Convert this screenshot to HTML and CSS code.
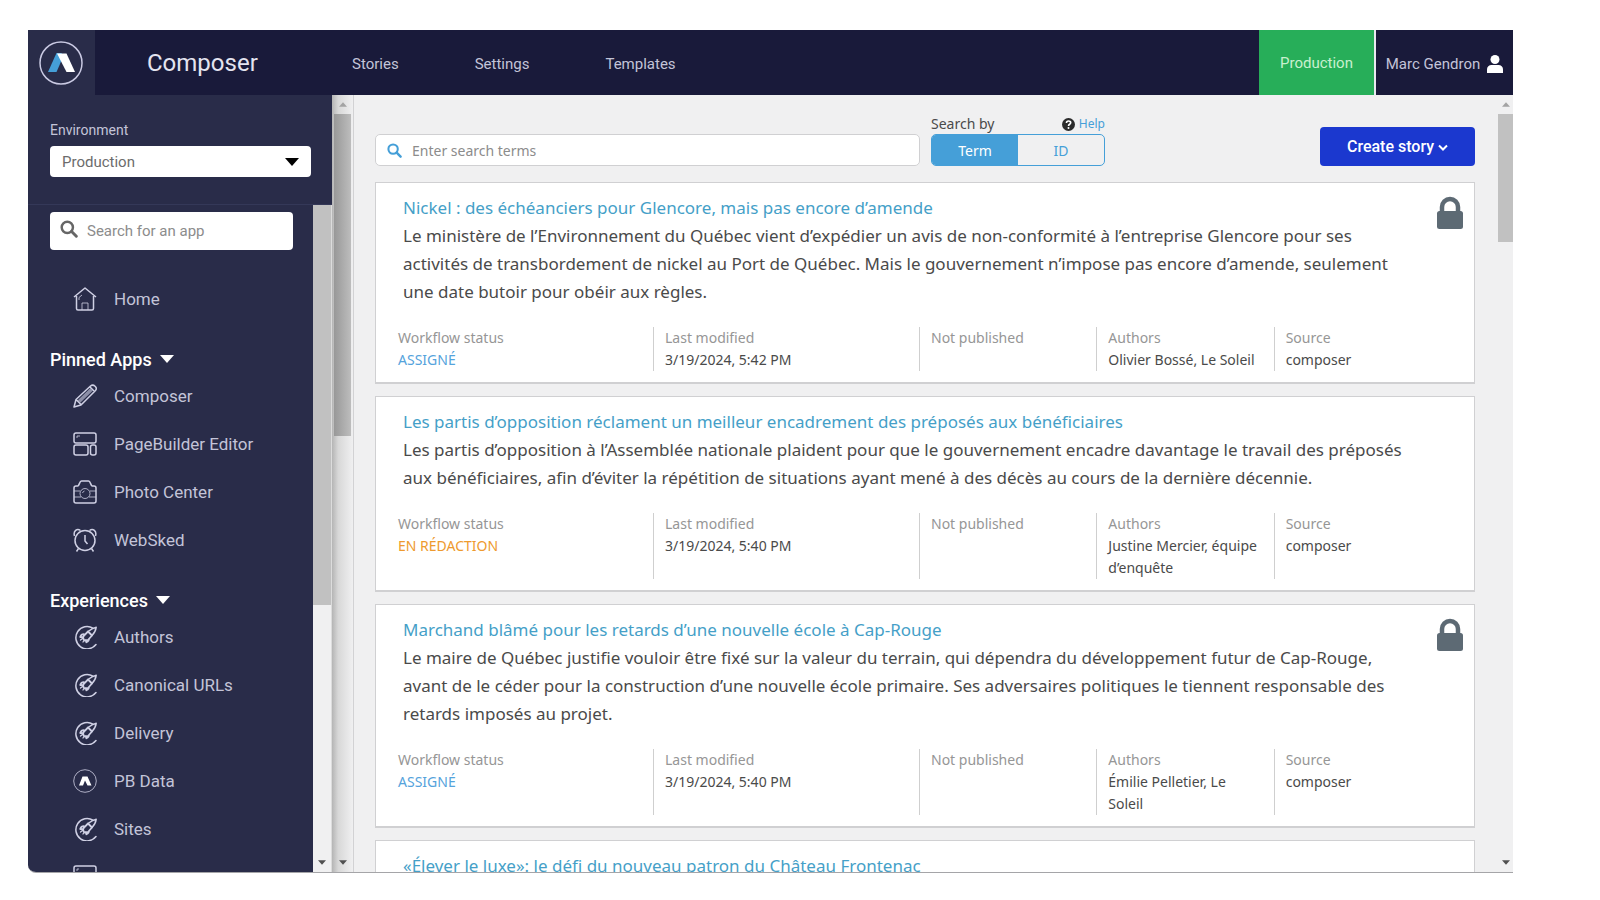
FILE: index.html
```html
<!DOCTYPE html>
<html lang="en">
<head>
<meta charset="utf-8">
<title>Composer</title>
<link rel="stylesheet" href="styles.css">
</head>
<body>
<svg class="sprite" aria-hidden="true">
  <symbol id="i-search" viewBox="0 0 16 16"><circle cx="6.5" cy="6.5" r="5" fill="none" stroke="currentColor" stroke-width="2.2"/><path d="M10.3 10.3l4.2 4.2" stroke="currentColor" stroke-width="2.6" stroke-linecap="round"/></symbol>
  <symbol id="i-rocket" viewBox="0 0 24 24"><g fill="none" stroke="currentColor" stroke-linecap="round" stroke-linejoin="round"><path d="M23 19.500A11.200 11.200 0 1 1 20 3.200M15 6.500C17.500 4.500 20 3 23.200 2.200 22.800 5.500 21.500 8 19 10.500" stroke-width="1.500"/><path d="M15 6.500l4 4-4 4.500c-1.500 1-3 .8-4-.2s-1.200-2.500-.2-4zM10.800 9.200c-1.800 0-3 1-3.600 2.800l3 .3M16 13.800c0 1.500-.8 2.700-2.600 3.500l-.4-2.500" stroke-width="1.800"/><path d="M9.500 13.500l-2 1.500M11 15.500L10 17" stroke-width="1.300"/></g></symbol>
  <symbol id="i-lock" viewBox="0 0 28 34"><path d="M6 16v-5a8 8 0 0 1 16 0v5" fill="none" stroke="currentColor" stroke-width="4.500"/><rect x="1" y="15" width="26" height="18" rx="2.500" fill="currentColor"/></symbol>
  <symbol id="i-down" viewBox="0 0 14 8"><path d="M0 0h14L7 8z" fill="currentColor"/></symbol>
</svg>

<div class="app">
  <header class="topbar">
    <a class="logo" href="#" aria-label="Arc home">
      <svg viewBox="0 0 44 44"><circle cx="22" cy="22" r="21" fill="none" stroke="#c9c9e2" stroke-width="1.500"/><path d="M9 31l8.500-19h5l1.500 4-6.500 15z" fill="#459fd8"/><path d="M18 12.500h9.500L36 31h-8.500z" fill="#fff"/></svg>
    </a>
    <div class="brand">Composer</div>
    <nav class="mainnav">
      <a href="#">Stories</a>
      <a href="#">Settings</a>
      <a href="#">Templates</a>
    </nav>
    <div class="env-tag">Production</div>
    <button class="user" type="button">Marc Gendron
      <svg viewBox="0 0 16 18"><circle cx="8" cy="4.500" r="4.500" fill="#fff"/><path d="M0 18v-3.500C0 11.500 2 10 4.500 10h7c2.500 0 4.500 1.500 4.500 4.500V18z" fill="#fff"/></svg>
    </button>
  </header>

  <div class="body">
    <aside class="sidebar">
      <div class="environment">
        <label for="env">Environment</label>
        <div class="select">
          <select id="env"><option>Production</option></select>
          <svg><use href="#i-down"/></svg>
        </div>
      </div>
      <div class="apps">
        <div class="apps-list">
          <label class="app-search"><svg><use href="#i-search"/></svg><input type="text" placeholder="Search for an app" aria-label="Search for an app"></label>
          <nav>
            <a class="item" href="#"><svg viewBox="0 0 24 24"><path d="M1 10L12 1l11 9M3.500 9v12.500a1.500 1.500 0 0 0 1.500 1.500h14a1.500 1.500 0 0 0 1.500-1.500V9"/><path class="thin" d="M9 23v-7h6v7M6 13v-2.500L9 8"/></svg>Home</a>
          </nav>
          <button class="heading" type="button">Pinned Apps <svg><use href="#i-down"/></svg></button>
          <nav>
            <a class="item" href="#"><svg viewBox="0 0 24 24"><path d="M1 23l2-7.500L17.500 2c3-2.500 7.500 1.500 5 4.500L8 21zM3 15.500L8.500 21M17 3l4.500 4.500"/><path d="M6 17.500L18.500 5.500" stroke-width="3.500" opacity=".6"/></svg>Composer</a>
            <a class="item" href="#"><svg viewBox="0 0 24 24"><rect x="1" y="1" width="22" height="10" rx="2"/><rect x="1" y="13" width="14" height="10" rx="2"/><rect x="17.500" y="13" width="5.500" height="10" rx="2"/><path class="thin" d="M4 6V4h3"/></svg>PageBuilder Editor</a>
            <a class="item" href="#"><svg viewBox="0 0 24 24"><path d="M1 8a2 2 0 0 1 2-2h2c1.500-1 1.500-5 3.500-5h7c2 0 2 4 3.500 5h2a2 2 0 0 1 2 2v13a2 2 0 0 1-2 2H3a2 2 0 0 1-2-2z"/><circle class="thin" cx="12" cy="13.500" r="5"/><path class="thin" d="M1 11h6M17 11h6M1 17h7M16 17h7M9.500 13a3 3 0 0 1 2-2"/></svg>Photo Center</a>
            <a class="item" href="#"><svg viewBox="0 0 24 24"><circle cx="12" cy="12.500" r="10"/><path d="M1.500 8C0 3 4 0 7.500 2.500M22.500 8C24 3 20 0 16.500 2.500M5.500 20.500L3.500 23.500M18.500 20.500l2 3M12 7v6l2.500 3"/></svg>WebSked</a>
          </nav>
          <button class="heading" type="button">Experiences <svg><use href="#i-down"/></svg></button>
          <nav>
            <a class="item" href="#"><svg><use href="#i-rocket"/></svg>Authors</a>
            <a class="item" href="#"><svg><use href="#i-rocket"/></svg>Canonical URLs</a>
            <a class="item" href="#"><svg><use href="#i-rocket"/></svg>Delivery</a>
            <a class="item" href="#"><svg viewBox="0 0 24 24"><circle class="thin" cx="12" cy="12" r="11.300"/><path d="M6 16.500L9.500 7.500h5l4 9h-4L12 11.500 10 16.500z" fill="#fff" stroke="none"/></svg>PB Data</a>
            <a class="item" href="#"><svg><use href="#i-rocket"/></svg>Sites</a>
            <a class="item" href="#" aria-label="More"><svg viewBox="0 0 24 24"><rect x="1" y="1" width="22" height="22" rx="2"/><path class="thin" d="M4 6V4h2"/></svg></a>
          </nav>
        </div>
        <div class="scroll scroll-apps"><span class="thumb"></span><svg class="down"><use href="#i-down"/></svg></div>
      </div>
    </aside>
    <div class="scroll scroll-side"><svg class="up"><use href="#i-down"/></svg><span class="thumb"></span><svg class="down"><use href="#i-down"/></svg></div>

    <main class="content">
      <div class="tools">
        <label class="search"><svg><use href="#i-search"/></svg><input type="text" placeholder="Enter search terms" aria-label="Enter search terms"></label>
        <div class="by">
          <div class="by-head"><span>Search by</span><a href="#"><svg viewBox="0 0 14 14"><circle cx="7" cy="7" r="7" fill="#2b2b2b"/><path d="M4.800 5.500c0-3 4.600-2.800 4.600-.3C9.400 6.800 7 6.700 7 8.500" fill="none" stroke="#fff" stroke-width="1.700"/><circle cx="7" cy="10.700" r="1.100" fill="#fff"/></svg>Help</a></div>
          <div class="toggle"><button class="on" type="button">Term</button><button type="button">ID</button></div>
        </div>
        <button class="create" type="button">Create story <svg viewBox="0 0 10 7"><path d="M1 1.500l4 4 4-4" fill="none" stroke="#fff" stroke-width="2"/></svg></button>
      </div>

      <article class="card">
        <svg class="lock" aria-label="Locked"><use href="#i-lock"/></svg>
        <h2><a href="#">Nickel : des échéanciers pour Glencore, mais pas encore d’amende</a></h2>
        <p>Le ministère de l’Environnement du Québec vient d’expédier un avis de non-conformité à l’entreprise Glencore pour ses activités de transbordement de nickel au Port de Québec. Mais le gouvernement n’impose pas encore d’amende, seulement une date butoir pour obéir aux règles.</p>
        <dl class="meta">
          <div><dt>Workflow status</dt><dd class="assigned">ASSIGNÉ</dd></div>
          <div><dt>Last modified</dt><dd>3/19/2024, 5:42 PM</dd></div>
          <div><dt>Not published</dt></div>
          <div><dt>Authors</dt><dd>Olivier Bossé, Le Soleil</dd></div>
          <div><dt>Source</dt><dd>composer</dd></div>
        </dl>
      </article>

      <article class="card">
        <h2><a href="#">Les partis d’opposition réclament un meilleur encadrement des préposés aux bénéficiaires</a></h2>
        <p>Les partis d’opposition à l’Assemblée nationale plaident pour que le gouvernement encadre davantage le travail des préposés aux bénéficiaires, afin d’éviter la répétition de situations ayant mené à des décès au cours de la dernière décennie.</p>
        <dl class="meta">
          <div><dt>Workflow status</dt><dd class="writing">EN RÉDACTION</dd></div>
          <div><dt>Last modified</dt><dd>3/19/2024, 5:40 PM</dd></div>
          <div><dt>Not published</dt></div>
          <div><dt>Authors</dt><dd>Justine Mercier, équipe d’enquête</dd></div>
          <div><dt>Source</dt><dd>composer</dd></div>
        </dl>
      </article>

      <article class="card">
        <svg class="lock" aria-label="Locked"><use href="#i-lock"/></svg>
        <h2><a href="#">Marchand blâmé pour les retards d’une nouvelle école à Cap-Rouge</a></h2>
        <p>Le maire de Québec justifie vouloir être fixé sur la valeur du terrain, qui dépendra du développement futur de Cap-Rouge, avant de le céder pour la construction d’une nouvelle école primaire. Ses adversaires politiques le tiennent responsable des retards imposés au projet.</p>
        <dl class="meta">
          <div><dt>Workflow status</dt><dd class="assigned">ASSIGNÉ</dd></div>
          <div><dt>Last modified</dt><dd>3/19/2024, 5:40 PM</dd></div>
          <div><dt>Not published</dt></div>
          <div><dt>Authors</dt><dd>Émilie Pelletier, Le Soleil</dd></div>
          <div><dt>Source</dt><dd>composer</dd></div>
        </dl>
      </article>

      <article class="card">
        <h2><a href="#">«Élever le luxe»: le défi du nouveau patron du Château Frontenac</a></h2>
      </article>
    </main>
    <div class="scroll scroll-main"><svg class="up"><use href="#i-down"/></svg><span class="thumb"></span><svg class="down"><use href="#i-down"/></svg></div>
  </div>
</div>
</body>
</html>
```
FILE: styles.css
```css
* { box-sizing: border-box; }
body {
  margin: 0;
  height: 100vh;
  padding: 30px 87px 27px 28px;
  background: #fff;
  font-family: "Noto Sans", "Open Sans", sans-serif;
  color: #4a4a4a;
}
button, input, select { font: inherit; color: inherit; border: 0; background: none; padding: 0; margin: 0; }
a { color: inherit; text-decoration: none; }
.sprite { display: none; }

.app {
  height: 100%;
  display: flex;
  flex-direction: column;
  overflow: hidden;
  background: #f0f0f1;
  border-bottom: 1px solid #a5a5a8;
  border-bottom-left-radius: 8px;
}

.topbar {
  flex: none;
  height: 65px;
  display: flex;
  align-items: center;
  background: #191a3a;
  color: #c3c4d8;
  font-family: Roboto, sans-serif;
  font-size: 15px;
}
.logo {
  width: 67px;
  height: 100%;
  display: flex;
  align-items: center;
  padding-left: 11px;
  background: #292c49;
}
.logo svg { width: 44px; height: 44px; }
.brand { width: 257px; padding-left: 52px; font-size: 24px; color: #e4e4f0; }
.mainnav { flex: 1; display: flex; gap: 76px; padding-top: 3px; font-size: 15px; }
.env-tag {
  width: 117px;
  height: 100%;
  display: flex;
  align-items: center;
  justify-content: center;
  background: #27ae59;
  border-right: 2px solid #e8e8f0;
  color: #c9f0cf;
}
.user {
  width: 137px;
  height: 100%;
  display: flex;
  align-items: center;
  justify-content: center;
  gap: 7px;
  padding-top: 2px;
  white-space: nowrap;
}
.user svg { width: 16px; height: 18px; }

.body { flex: 1; min-height: 0; display: flex; }

.sidebar {
  flex: none;
  width: 304px;
  display: flex;
  flex-direction: column;
  background: #292c49;
  color: #c3c4d8;
  font-family: Roboto, sans-serif;
  font-size: 17px;
}
.environment { flex: none; height: 110px; padding: 25px 21px 0 22px; border-bottom: 1px solid #343858; }
.environment label { display: block; font-size: 14px; line-height: 20px; margin-bottom: 6px; }
.select { display: grid; align-items: center; }
.select select {
  grid-area: 1 / 1;
  appearance: none;
  width: 100%;
  height: 31px;
  padding-left: 12px;
  border-radius: 4px;
  background: #fff;
  color: #6c6c6c;
  font-size: 15px;
}
.select svg { grid-area: 1 / 1; justify-self: end; margin-right: 12px; width: 14px; height: 8px; color: #000; pointer-events: none; }
.apps { flex: 1; min-height: 0; display: flex; }
.apps-list { flex: 1; padding: 7px 20px 0 22px; overflow: hidden; }
.app-search {
  display: flex;
  align-items: center;
  gap: 9px;
  height: 38px;
  padding-left: 10px;
  margin-bottom: 25px;
  border-radius: 4px;
  background: #fff;
  color: #666;
  font-size: 15px;
}
.app-search svg { flex: none; width: 18px; height: 18px; margin-bottom: 4px; }
.app-search input, .search input { flex: 1; min-width: 0; outline: 0; }
input::placeholder { color: #8c8c8c; opacity: 1; }
.item { display: flex; align-items: center; gap: 17px; height: 48px; padding-left: 23px; }
.item svg { flex: none; width: 24px; height: 24px; fill: none; stroke: currentColor; stroke-width: 1.5; stroke-linejoin: round; color: #cfd0e4; }
.item .thin { stroke-width: 1; opacity: .8; }
.heading {
  display: flex;
  align-items: center;
  gap: 8px;
  height: 26px;
  margin-top: 23px;
  font-size: 18px;
  font-weight: 500;
  color: #fff;
}
.heading svg { width: 14px; height: 8px; }

.scroll { flex: none; display: flex; flex-direction: column; align-items: center; color: #505050; background: #f0f0f1; }
.scroll .up, .scroll .down { flex: none; width: 8px; height: 5px; }
.scroll .up { transform: rotate(180deg); margin: 7px 0 7px; color: #a3a3a3; }
.scroll .down { margin: auto 0 7px; }
.scroll .thumb { width: 100%; background: #c1c1c1; }
.scroll-apps { width: 19px; border-right: 1px solid #dcdcdc; }
.scroll-apps .thumb { height: 60%; }
.scroll-side { width: 22px; background: linear-gradient(90deg, #b5b5b5, #d8d8d8 30%, #f0f0f1); border-right: 1px solid #d2d2d4; }
.scroll-side .thumb { width: 17px; height: 322px; background: linear-gradient(90deg, #989898, #bdbdbd); }
.scroll-main { width: 15px; }
.scroll-main .thumb { height: 128px; }

.content { flex: 1; min-width: 0; padding: 19px 23px 0 21px; overflow: hidden; }
.tools { display: flex; align-items: flex-end; margin-bottom: 16px; }
.search {
  width: 545px;
  height: 32px;
  display: flex;
  align-items: center;
  gap: 10px;
  padding-left: 11px;
  border: 1px solid #d0d0d2;
  border-radius: 5px;
  background: #fff;
  font-size: 14px;
}
.search svg { flex: none; width: 15px; height: 15px; color: #459fd8; }
.by { width: 174px; margin-left: 11px; }
.by-head { display: flex; justify-content: space-between; align-items: center; line-height: 20px; font-size: 14px; }
.by-head a { display: flex; align-items: center; gap: 4px; font-size: 12px; color: #459fd8; }
.by-head svg { width: 13px; height: 13px; }
.toggle { display: flex; height: 32px; border: 1px solid #459fd8; border-radius: 5px; overflow: hidden; }
.toggle button { flex: 1; font-size: 14px; color: #459fd8; }
.toggle .on { background: #459fd8; color: #fff; }
.create {
  width: 155px;
  height: 39px;
  margin-left: auto;
  border-radius: 4px;
  background: #1b38cf;
  color: #fff;
  font-family: Roboto, sans-serif;
  font-size: 16px;
  font-weight: 500;
}
.create svg { width: 10px; height: 7px; margin-bottom: 1px; }

.card {
  position: relative;
  margin-bottom: 12px;
  padding: 11px 23px 11px 11px;
  background: #fff;
  border: 1px solid #d0d0d2;
  border-bottom-width: 2px;
}
.card h2, .card p { margin: 0 42px 0 16px; font-size: 17px; line-height: 28px; font-weight: 400; }
.card h2 { color: #459fc8; }
.lock { position: absolute; top: 13px; right: 10px; width: 28px; height: 34px; color: #5d6a74; }
.meta { display: grid; grid-template-columns: 3fr 3fr 2fr 2fr 2fr; margin: 21px 0 0; font-size: 14px; line-height: 22px; }
.meta div { padding: 0 11px; }
.meta div + div { border-left: 1px solid #cfcfcf; }
.meta dt { color: #969696; }
.meta dd { margin: 0; }
.meta .assigned { color: #55a3dc; }
.meta .writing { color: #ee9a2e; }
```
